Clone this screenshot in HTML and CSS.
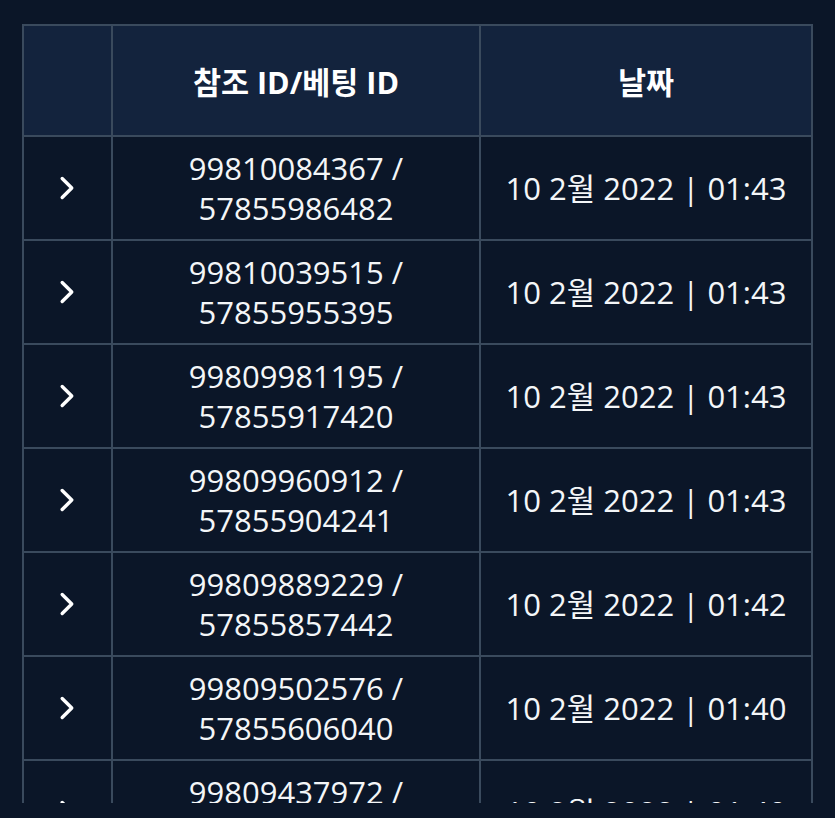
FILE: index.html
```html
<!DOCTYPE html>
<html lang="ko">
<head>
<meta charset="utf-8">
<link rel="stylesheet" href="styles.css">
</head>
<body>
<div class="wrap">
<table class="bets">
<thead>
<tr><th class="c-exp"></th><th class="c-id">참조 ID/베팅 ID</th><th class="c-date">날짜</th></tr>
</thead>
<tbody>
<tr><td class="exp"><svg class="chev" viewBox="0 0 16 24"><path d="M3 3 L12 12 L3 21"/></svg></td><td>99810084367 /<br>57855986482</td><td>10 2월 2022 | 01:43</td></tr>
<tr><td class="exp"><svg class="chev" viewBox="0 0 16 24"><path d="M3 3 L12 12 L3 21"/></svg></td><td>99810039515 /<br>57855955395</td><td>10 2월 2022 | 01:43</td></tr>
<tr><td class="exp"><svg class="chev" viewBox="0 0 16 24"><path d="M3 3 L12 12 L3 21"/></svg></td><td>99809981195 /<br>57855917420</td><td>10 2월 2022 | 01:43</td></tr>
<tr><td class="exp"><svg class="chev" viewBox="0 0 16 24"><path d="M3 3 L12 12 L3 21"/></svg></td><td>99809960912 /<br>57855904241</td><td>10 2월 2022 | 01:43</td></tr>
<tr><td class="exp"><svg class="chev" viewBox="0 0 16 24"><path d="M3 3 L12 12 L3 21"/></svg></td><td>99809889229 /<br>57855857442</td><td>10 2월 2022 | 01:42</td></tr>
<tr><td class="exp"><svg class="chev" viewBox="0 0 16 24"><path d="M3 3 L12 12 L3 21"/></svg></td><td>99809502576 /<br>57855606040</td><td>10 2월 2022 | 01:40</td></tr>
<tr><td class="exp"><svg class="chev" viewBox="0 0 16 24"><path d="M3 3 L12 12 L3 21"/></svg></td><td>99809437972 /<br>57855560000</td><td>10 2월 2022 | 01:40</td></tr>
</tbody>
</table>
</div>
</body>
</html>
```
FILE: styles.css
```css
html, body {
  margin: 0;
  padding: 0;
  background: #0b1628;
}
body {
  font-family: "Open Sans", "Noto Sans CJK KR", sans-serif;
  color: #f4f6f8;
  height: 818px;
  overflow: hidden;
}
.wrap {
  margin: 24px 0 0 22px;
  width: 791px;
  height: 779px;
  overflow: hidden;
}
.bets {
  width: 791px;
  border-collapse: collapse;
  table-layout: fixed;
}
.bets th, .bets td {
  border: 2px solid #3a4a5d;
  text-align: center;
  vertical-align: middle;
  padding: 0;
}
.bets th {
  background: #13233d;
  height: 109px;
  font-weight: 700;
  font-size: 30.5px;
  color: #ffffff;
}
.bets td {
  background: #0b1628;
  height: 102px;
  font-size: 31px;
  line-height: 40px;
}
.c-exp { width: 87px; }
.c-id { width: 366px; }
.chev {
  width: 17px;
  height: 26px;
  display: block;
  margin: 0 auto;
  fill: none;
  stroke: #ffffff;
  stroke-width: 3.2;
  stroke-linecap: round;
  stroke-linejoin: round;
}
```
